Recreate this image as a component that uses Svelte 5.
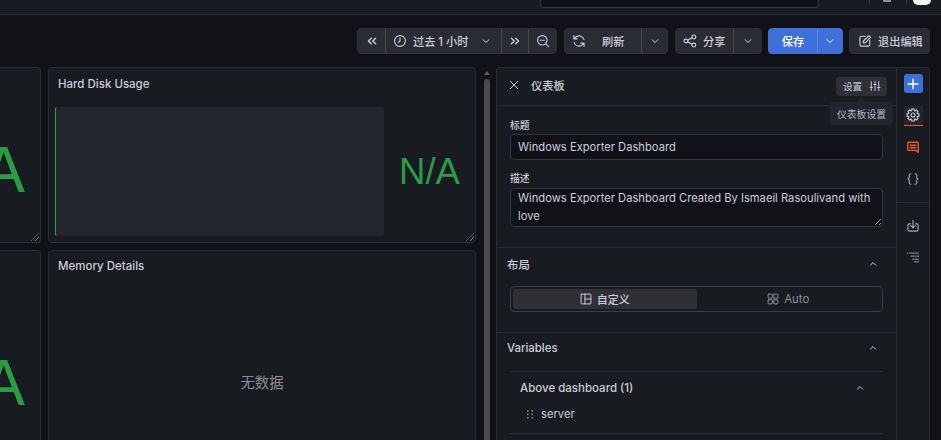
<script>
  const chevDown = "M4 6.2 8 10l4-3.8";
  const chevUp = "M4.5 9.5 8 6l3.5 3.5";

  // eight-toothed cog outline for the settings tab
  let gear = "";
  for (let i = 0; i < 8; i++) {
    const a = (i * Math.PI) / 4;
    const pts = [
      [a - 0.3, 5.2],
      [a - 0.2, 7],
      [a + 0.2, 7],
      [a + 0.3, 5.2],
    ];
    for (const [t, r] of pts) {
      gear += `${gear ? "L" : "M"}${(8 + r * Math.cos(t)).toFixed(2)} ${(8 + r * Math.sin(t)).toFixed(2)}`;
    }
  }
  gear += "Z";
</script>

<div class="page">
  <div class="topbar">
    <div class="search"></div>
    <div class="top-icons">
      <span class="sep"></span>
      <span class="dot-small"></span>
      <span class="sep"></span>
      <span class="avatar"></span>
    </div>
  </div>

  <div class="toolbar">
    <div class="btn-group wide-gap">
      <button class="btn icon-btn first">
        <svg viewBox="0 0 14 14" class="ico14 medium"><path d="M6.3 4.2 3.4 7l2.9 2.8M10.6 4.2 7.7 7l2.9 2.8" /></svg>
      </button>
      <button class="btn time">
        <svg viewBox="0 0 16 16" class="ico14"><circle cx="8" cy="8" r="6.2" /><path d="M8 4.6V8l-2 1.6" /></svg>
        <span>过去 1 小时</span>
        <svg viewBox="0 0 16 16" class="ico12 caret"><path d={chevDown} /></svg>
      </button>
      <button class="btn icon-btn narrow">
        <svg viewBox="0 0 14 14" class="ico14 medium"><path d="M3.4 4.2 6.3 7 3.4 9.8M7.7 4.2 10.6 7 7.7 9.8" /></svg>
      </button>
      <button class="btn icon-btn zoom">
        <svg viewBox="0 0 16 16" class="ico14"><circle cx="7.2" cy="7.2" r="5.4" /><path d="M4.8 7.2h4.8M11.2 11.2 14.5 14.5" /></svg>
      </button>
    </div>

    <div class="btn-group wide-gap">
      <button class="btn refresh">
        <svg viewBox="0 0 16 16" class="ico14"><path d="M13.6 6.2A5.9 5.9 0 0 0 3.6 4.1L2.2 5.6M2.4 9.8a5.9 5.9 0 0 0 10 2.1l1.4-1.5M2.2 1.9v3.7h3.7M13.8 14.1v-3.7h-3.7" /></svg>
        <span>刷新</span>
      </button>
      <button class="btn icon-btn caret-btn">
        <svg viewBox="0 0 16 16" class="ico12"><path d={chevDown} /></svg>
      </button>
    </div>

    <div class="btn-group">
      <button class="btn share">
        <svg viewBox="0 0 16 16" class="ico14"><circle cx="3.4" cy="8" r="2.2" /><circle cx="12.4" cy="3.4" r="2.2" /><circle cx="12.4" cy="12.6" r="2.2" /><path d="M5.4 7 10.4 4.4M5.4 9l5 2.6" /></svg>
        <span>分享</span>
      </button>
      <button class="btn icon-btn caret-share">
        <svg viewBox="0 0 16 16" class="ico12"><path d={chevDown} /></svg>
      </button>
    </div>

    <div class="btn-group primary">
      <button class="btn save">保存</button>
      <button class="btn icon-btn caret-primary">
        <svg viewBox="0 0 16 16" class="ico12"><path d={chevDown} /></svg>
      </button>
    </div>

    <button class="btn exit">
      <svg viewBox="0 0 16 16" class="ico14"><path d="M8.4 2.6H3.6a1.4 1.4 0 0 0-1.4 1.4v8.4a1.4 1.4 0 0 0 1.4 1.4H12a1.4 1.4 0 0 0 1.4-1.4V7.6M6.2 10.2V8L12.4 1.8l2 2L8.2 10.2H6.2Z" /></svg>
      <span>退出编辑</span>
    </button>
  </div>

  <div class="workspace">
    <div class="grid">
      <section class="panel clipped">
        <div class="big-value">N/A</div>
        <span class="resize"></span>
      </section>
      <section class="panel disk">
        <h3>Hard Disk Usage</h3>
        <div class="disk-body">
          <div class="gauge"></div>
          <div class="value">N/A</div>
        </div>
        <span class="resize"></span>
      </section>
      <section class="panel clipped low">
        <div class="big-value">N/A</div>
      </section>
      <section class="panel low memory">
        <h3>Memory Details</h3>
        <div class="nodata">无数据</div>
      </section>
    </div>

    <div class="scrollbar">
      <span class="arrow"></span>
      <span class="thumb"></span>
    </div>

    <aside class="side">
      <div class="editor">
        <header class="editor-head">
          <svg viewBox="0 0 16 16" class="ico12 close"><path d="M3 3l10 10M13 3 3 13" /></svg>
          <span class="editor-title">仪表板</span>
          <button class="settings-chip">
            设置
            <svg viewBox="0 0 16 16" class="ico12"><path d="M3 2v12M8 2v12M13 2v12M1.4 10h3.2M6.4 6h3.2M11.4 10h3.2" /></svg>
          </button>
          <div class="tooltip">仪表板设置</div>
        </header>

        <div class="form">
          <label class="field-label" for="dash-title">标题</label>
          <input id="dash-title" value="Windows Exporter Dashboard" />
          <label class="field-label second" for="dash-desc">描述</label>
          <textarea id="dash-desc" rows="2">Windows Exporter Dashboard Created By Ismaeil Rasoulivand with love</textarea>
        </div>

        <div class="section layout">
          <div class="section-head">
            <span>布局</span>
            <svg viewBox="0 0 16 16" class="ico12"><path d={chevUp} /></svg>
          </div>
          <div class="segmented">
            <div class="seg active">
              <svg viewBox="0 0 16 16" class="ico12"><rect x="1.5" y="1.5" width="13" height="13" rx="0.6" /><path d="M6.5 1.5v13M6.5 8h8" /></svg>
              自定义
            </div>
            <div class="seg">
              <svg viewBox="0 0 16 16" class="ico12"><rect x="1.5" y="1.5" width="5.5" height="5.5" rx="0.5" /><rect x="9" y="1.5" width="5.5" height="5.5" rx="0.5" /><rect x="1.5" y="9" width="5.5" height="5.5" rx="0.5" /><rect x="9" y="9" width="5.5" height="5.5" rx="0.5" /></svg>
              <span class="auto">Auto</span>
            </div>
          </div>
        </div>

        <div class="section variables">
          <div class="section-head">
            <span>Variables</span>
            <svg viewBox="0 0 16 16" class="ico12"><path d={chevUp} /></svg>
          </div>
          <div class="group">
            <div class="group-head">
              <span>Above dashboard (1)</span>
              <svg viewBox="0 0 16 16" class="ico12"><path d={chevUp} /></svg>
            </div>
            <div class="var-row">
              <svg viewBox="0 0 6 9" class="grip">
                {#each [0, 3.5, 7] as y}
                  <rect x="0" {y} width="1.6" height="1.6" />
                  <rect x="4.4" {y} width="1.6" height="1.6" />
                {/each}
              </svg>
              server
            </div>
          </div>
        </div>
      </div>

      <nav class="tabs">
        <div class="tabs-top">
          <button class="add">
            <svg viewBox="0 0 16 16" class="ico14 heavy"><path d="M8 2.5v11M2.5 8h11" /></svg>
          </button>
          <button class="tab current">
            <svg viewBox="0 0 16 16" class="ico14"><path d={gear} /><circle cx="8" cy="8" r="2.3" /></svg>
          </button>
          <button class="tab orange">
            <svg viewBox="0 0 16 16" class="ico14 heavy"><path d="M3 2.5h10a1 1 0 0 1 1 1v10.6l-2.6-2.2H3a1 1 0 0 1-1-1V3.5a1 1 0 0 1 1-1ZM4.8 6h6.4M4.8 8.8h6.4" /></svg>
          </button>
          <button class="tab">
            <svg viewBox="0 0 16 16" class="ico14"><path d="M5.5 2C4 2 3.7 2.9 3.7 4v2.4c0 .9-.5 1.4-1.5 1.6 1 .2 1.5.7 1.5 1.6V12c0 1.1.3 2 1.8 2M10.5 2c1.5 0 1.8.9 1.8 2v2.4c0 .9.5 1.4 1.5 1.6-1 .2-1.5.7-1.5 1.6V12c0 1.1-.3 2-1.8 2" /></svg>
          </button>
        </div>
        <div class="tabs-bottom">
          <button class="tab">
            <svg viewBox="0 0 16 16" class="ico14"><path d="M5 5.5H3.6a1.4 1.4 0 0 0-1.4 1.4v5.5a1.4 1.4 0 0 0 1.4 1.4h8.8a1.4 1.4 0 0 0 1.4-1.4V6.9a1.4 1.4 0 0 0-1.4-1.4H11M8 1.5V10M5.4 7.6 8 10.2l2.6-2.6" /></svg>
          </button>
          <button class="tab">
            <svg viewBox="0 0 16 16" class="ico14 list"><path d="M1.5 3.5h.8M4 3.5h10.5M5.5 7h9M7.5 10.5h7M9.5 13.5h5" /></svg>
          </button>
        </div>
      </nav>
    </aside>
  </div>
</div>

<style>
  :global(body) {
    margin: 0;
    background: #111217;
  }

  * {
    box-sizing: border-box;
  }

  svg {
    fill: none;
    stroke: currentColor;
    stroke-width: 1.3;
    stroke-linecap: round;
    stroke-linejoin: round;
    flex: none;
  }

  .ico12 {
    width: 12px;
    height: 12px;
  }

  .ico14 {
    width: 14px;
    height: 14px;
  }

  .heavy {
    stroke-width: 1.6;
  }

  .medium {
    stroke-width: 1.4;
  }

  button {
    font: inherit;
    color: inherit;
    border: none;
    padding: 0;
    background: none;
  }

  .page {
    width: 941px;
    height: 440px;
    overflow: hidden;
    background: #111217;
    color: #ccccdc;
    font-family: Inter, "Noto Sans CJK SC", sans-serif;
    font-size: 11.2px;
    font-weight: 500;
    display: flex;
    flex-direction: column;
  }

  .topbar {
    height: 15px;
    flex: none;
    background: #181b1f;
    border-bottom: 1px solid #2a2d33;
    display: flex;
    justify-content: flex-end;
    align-items: flex-start;
    padding-right: 10px;
    overflow: hidden;
  }

  .search {
    width: 279px;
    height: 8px;
    margin-right: 50px;
    border: 1px solid #33363c;
    border-top: none;
    border-radius: 0 0 4px 4px;
    background: #111217;
  }

  .top-icons {
    display: flex;
    align-items: flex-start;
    width: 62px;
  }

  .sep {
    width: 1px;
    height: 5px;
    background: #33363c;
  }

  .dot-small {
    width: 8px;
    height: 2px;
    margin: 0 15px 0 13px;
    background: #8e9099;
  }

  .avatar {
    width: 18px;
    height: 5px;
    margin-left: 6px;
    border-radius: 0 0 9px 9px;
    background: #f5f5f5;
  }

  .toolbar {
    height: 52px;
    flex: none;
    display: flex;
    align-items: flex-start;
    justify-content: flex-end;
    gap: 6px;
    padding: 13px 11px 0 0;
  }

  .wide-gap {
    margin-right: 1px;
  }

  .btn-group {
    display: flex;
    flex: none;
    height: 26px;
    border-radius: 4px;
    overflow: hidden;
    border: 1px solid #2e3036;
    background: #2a2c33;
  }

  .btn {
    height: 100%;
    display: flex;
    align-items: center;
    color: #ccccdc;
    background: #2a2c33;
    white-space: nowrap;
    flex: none;
  }

  .btn + .btn {
    border-left: 1px solid #44464c;
  }

  .icon-btn {
    justify-content: center;
  }

  .first {
    width: 27px;
  }

  .narrow {
    width: 27px;
  }

  .zoom {
    width: 28px;
  }

  .time {
    width: 116px;
    padding-left: 7px;
    gap: 6px;
  }

  .caret {
    margin-left: 6px;
  }

  .refresh {
    width: 76px;
    padding-left: 7px;
    gap: 16px;
  }

  .caret-btn {
    width: 26px;
  }

  .share {
    width: 57px;
    padding-left: 7px;
    gap: 6px;
  }

  .caret-share {
    width: 28px;
  }

  .primary {
    background: #3d71d9;
    border-color: #3d71d9;
  }

  .primary .btn {
    background: #3d71d9;
    color: #fff;
  }

  .save {
    width: 48px;
    justify-content: center;
  }

  .primary .btn + .btn {
    border-left: 1px solid #5a87e0;
  }

  .caret-primary {
    width: 25px;
  }

  .exit {
    height: 26px;
    width: 81px;
    border: 1px solid #2e3036;
    border-radius: 4px;
    padding-left: 8px;
    gap: 6px;
  }

  .workspace {
    flex: 1;
    min-height: 0;
    display: flex;
  }

  .grid {
    width: 476px;
    flex: none;
    display: grid;
    grid-template-columns: 41px 428px;
    grid-template-rows: 176px 200px;
    column-gap: 7px;
    row-gap: 7px;
  }

  .panel {
    position: relative;
    background: #181b1f;
    border: 1px solid #2a2d33;
    border-radius: 4px;
    overflow: hidden;
  }

  .clipped {
    border-left: none;
    border-top-left-radius: 0;
    border-bottom-left-radius: 0;
  }

  h3 {
    margin: 0;
    padding: 8px 9px 0;
    font-size: 11.5px;
    line-height: 16px;
    font-weight: 500;
    color: #ccccdc;
  }

  .memory h3 {
    padding-top: 7px;
  }

  .big-value {
    position: absolute;
    right: 15px;
    top: 70px;
    font-family: "Liberation Sans", sans-serif;
    font-size: 64px;
    line-height: 64px;
    color: #299c46;
    font-weight: 400;
    white-space: nowrap;
  }

  .low .big-value {
    top: 100px;
  }

  .disk-body {
    display: flex;
    align-items: stretch;
    padding: 15px 6px 0;
    height: 144px;
  }

  .gauge {
    width: 329px;
    height: 129px;
    flex: none;
    background: #22252b;
    border-left: 1px solid #3d9b4f;
    border-radius: 2px;
  }

  .value {
    flex: 1;
    display: flex;
    align-items: center;
    justify-content: center;
    font-size: 36.6px;
    font-weight: 400;
    font-family: "Liberation Sans", sans-serif;
    color: #299c46;
    padding-left: 6px;
  }

  .nodata {
    display: flex;
    justify-content: center;
    padding-top: 99px;
    font-size: 14.4px;
    line-height: 20px;
    font-weight: 400;
    color: #8a8b94;
  }

  .resize {
    position: absolute;
    right: 1px;
    bottom: 1px;
    width: 8px;
    height: 8px;
    background: repeating-linear-gradient(135deg, transparent 0 2px, #7c7e85 2px 3px);
    clip-path: polygon(100% 0, 100% 100%, 0 100%);
  }

  .scrollbar {
    width: 8px;
    margin-left: 7px;
    flex: none;
    display: flex;
    flex-direction: column;
    align-items: center;
    padding-top: 4px;
    gap: 4px;
  }

  .arrow {
    width: 0;
    height: 0;
    border-left: 3px solid transparent;
    border-right: 3px solid transparent;
    border-bottom: 4px solid #5a5b60;
  }

  .thumb {
    width: 6px;
    flex: 1;
    border-radius: 3px 3px 0 0;
    background: #4a4b50;
  }

  .side {
    width: 434px;
    margin-left: 5px;
    flex: none;
    display: flex;
    background: #181b1f;
    border: 1px solid #2a2d33;
    border-bottom: none;
    border-radius: 4px 4px 0 0;
  }

  .editor {
    width: 400px;
    flex: none;
    border-right: 1px solid #2a2d33;
  }

  .editor-head {
    position: relative;
    height: 38px;
    display: flex;
    align-items: center;
    padding: 0 9px 3px 11px;
    border-bottom: 1px solid #2a2d33;
  }

  .editor-title {
    margin-left: 11px;
  }

  .settings-chip {
    margin-left: auto;
    margin-top: 2px;
    width: 51px;
    height: 19px;
    display: flex;
    align-items: center;
    gap: 7px;
    padding-left: 7px;
    border-radius: 4px;
    background: #2e3036;
    font-size: 9.6px;
    font-weight: 400;
  }

  .tooltip {
    position: absolute;
    right: 3px;
    top: 34px;
    width: 63px;
    height: 23px;
    border-radius: 4px;
    background: #22252b;
    color: #b8b9c4;
    font-size: 9.8px;
    font-weight: 400;
    display: flex;
    align-items: center;
    justify-content: center;
    z-index: 2;
  }

  .tooltip::before {
    content: "";
    position: absolute;
    top: -5px;
    left: 26px;
    border-left: 5px solid transparent;
    border-right: 5px solid transparent;
    border-bottom: 5px solid #22252b;
  }

  .form {
    padding: 13px 13px 20px;
    border-bottom: 1px solid #2a2d33;
    display: flex;
    flex-direction: column;
  }

  .field-label {
    font-size: 9.8px;
    line-height: 13px;
    margin-bottom: 2px;
  }

  .field-label.second {
    margin-top: 12px;
    margin-bottom: 3px;
  }

  input,
  textarea {
    display: block;
    width: 100%;
    background: #111217;
    border: 1px solid #33363c;
    border-radius: 4px;
    color: #ccccdc;
    font: 400 11.2px/18px Inter, sans-serif;
    padding: 0 7px;
    margin: 0;
    outline: none;
  }

  input {
    height: 26px;
  }

  textarea {
    height: 39px;
    resize: vertical;
    overflow: hidden;
  }

  .section {
    padding: 0 13px;
    border-bottom: 1px solid #2a2d33;
  }

  .section-head {
    height: 31px;
    display: flex;
    justify-content: space-between;
    align-items: center;
    margin: 0 -3px;
    padding: 0 7px 0 0;
    font-size: 11.4px;
  }

  .layout {
    height: 85px;
  }

  .segmented {
    margin-top: 7px;
    height: 26px;
    display: grid;
    grid-template-columns: 1fr 1fr;
    padding: 2px;
    border: 1px solid #3a3d43;
    border-radius: 4px;
    color: #8e8f99;
    font-size: 11px;
  }

  .seg {
    display: flex;
    align-items: center;
    justify-content: center;
    gap: 5px;
    border-radius: 2px;
  }

  .seg.active {
    background: #2e3036;
    color: #ccccdc;
  }

  .auto {
    font-size: 11.4px;
    font-weight: 400;
  }

  .variables {
    border-bottom: none;
  }

  .variables .section-head {
    height: 30px;
  }

  .group {
    margin-top: 8px;
    border-top: 1px solid #2a2d33;
    border-bottom: 1px solid #2a2d33;
    height: 63px;
  }

  .group-head {
    height: 31px;
    display: flex;
    justify-content: space-between;
    align-items: center;
    padding: 0 17px 0 10px;
    font-size: 11.5px;
  }

  .var-row {
    display: flex;
    align-items: center;
    gap: 8px;
    padding: 4px 0 0 17px;
    font-weight: 400;
    font-size: 11.2px;
  }

  .grip {
    width: 6px;
    height: 9px;
    fill: #7c7e85;
    stroke: none;
  }

  .tabs {
    width: 32px;
    flex: none;
    display: flex;
    flex-direction: column;
    align-items: center;
  }

  .tabs-top {
    width: 100%;
    padding-top: 6px;
    display: flex;
    flex-direction: column;
    align-items: center;
    border-bottom: 1px solid #2a2d33;
    height: 135px;
  }

  .add {
    width: 19px;
    height: 19px;
    border-radius: 3px;
    background: #3d71d9;
    color: #fff;
    display: flex;
    align-items: center;
    justify-content: center;
  }

  .tab {
    width: 19px;
    height: 20px;
    display: flex;
    align-items: center;
    justify-content: center;
    color: #a6a7b2;
    margin-top: 12px;
  }

  .tab.current {
    margin-top: 13px;
    padding-bottom: 1px;
    background: #22252b;
    border-bottom: 1px solid #f05a28;
    color: #ccccdc;
  }

  .tab.orange {
    margin-top: 11px;
    color: #f05a28;
  }

  .tabs-bottom {
    padding-top: 1px;
    display: flex;
    flex-direction: column;
    align-items: center;
  }

  .tabs-bottom .tab + .tab {
    margin-top: 11px;
  }

  .list {
    stroke-width: 1;
  }
</style>
